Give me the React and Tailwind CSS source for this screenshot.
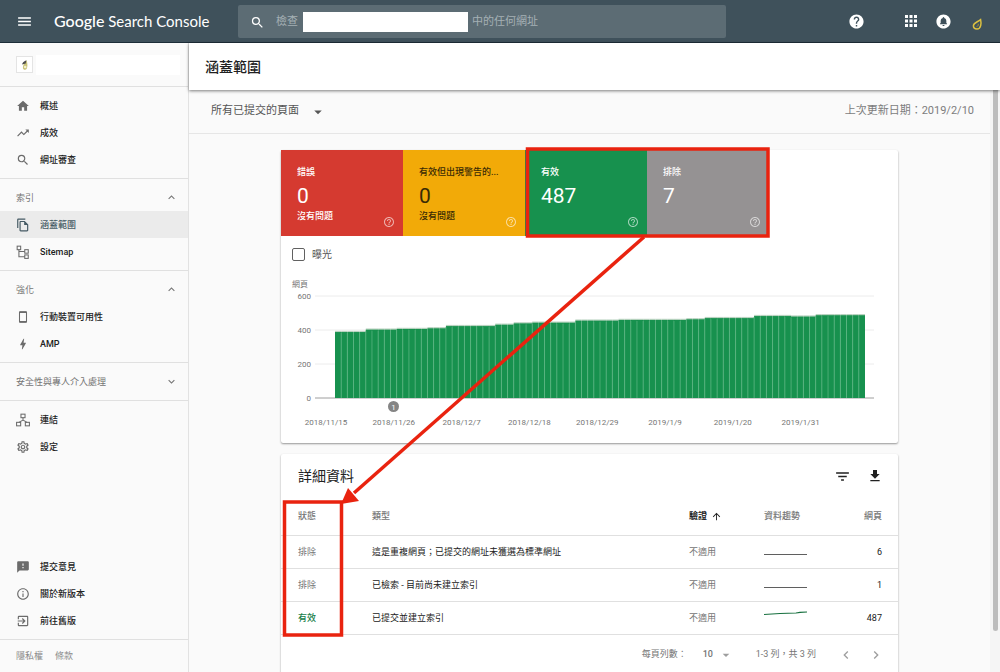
import React from "react";
import clsx from "clsx";
import {
  MdApps,
  MdArrowDropDown,
  MdArrowUpward,
  MdBolt,
  MdChevronLeft,
  MdChevronRight,
  MdCircleNotifications,
  MdExitToApp,
  MdExpandLess,
  MdExpandMore,
  MdFeedback,
  MdFileDownload,
  MdFilterList,
  MdHelp,
  MdHelpOutline,
  MdHome,
  MdInfoOutline,
  MdMenu,
  MdOutlineFileCopy,
  MdOutlineSettings,
  MdSearch,
  MdTrendingUp,
} from "react-icons/md";

function SitemapIcon({ size = 14 }) {
  return (
    <svg width={size} height={size} viewBox="0 0 24 24" fill="none" stroke="currentColor" strokeWidth="1.8">
      <rect x="2" y="2" width="6" height="6" />
      <rect x="15" y="8" width="6" height="6" />
      <rect x="15" y="17" width="6" height="6" />
      <path d="M5 8v12h10M5 11h10" />
    </svg>
  );
}

function LinksIcon({ size = 14 }) {
  return (
    <svg width={size} height={size} viewBox="0 0 24 24" fill="none" stroke="currentColor" strokeWidth="1.8">
      <rect x="8.5" y="2" width="7" height="6" />
      <rect x="1" y="16" width="7" height="6" />
      <rect x="16" y="16" width="7" height="6" />
      <path d="M12 8v4M5 16l7-4 7 4" />
    </svg>
  );
}

function PhoneIcon({ size = 14 }) {
  return (
    <svg width={size} height={size} viewBox="0 0 24 24" fill="none" stroke="currentColor">
      <rect x="6" y="3" width="12" height="18" rx="1" strokeWidth="1.8" />
      <path d="M6 4h12M6 20h12" strokeWidth="2.500" />
    </svg>
  );
}

function DropLogo({ className }) {
  return (
    <svg className={className} viewBox="0 0 14 14" fill="none">
      <path d="M10.6 2.6c.8 3.500.6 9.400-3.600 9.400-2.200 0-3.600-1.400-3.600-3.200C3.400 5.900 7.300 5.200 10.600 2.600z" stroke="#dcc040" strokeWidth="1.500" />
      <path d="M8.200 6.800c.3 1.300-.2 2.400-1.600 2.800" stroke="#b39b2a" strokeWidth="1" />
    </svg>
  );
}

const SECTIONS = [
  {
    items: [
      { label: "概述", icon: MdHome },
      { label: "成效", icon: MdTrendingUp },
      { label: "網址審查", icon: MdSearch },
    ],
  },
  {
    title: "索引",
    open: true,
    items: [
      { label: "涵蓋範圍", icon: MdOutlineFileCopy, active: true },
      { label: "Sitemap", icon: SitemapIcon },
    ],
  },
  {
    title: "強化",
    open: true,
    items: [
      { label: "行動裝置可用性", icon: PhoneIcon },
      { label: "AMP", icon: MdBolt },
    ],
  },
  { title: "安全性與專人介入處理", open: false, items: [] },
];

const TOOLS = [
  { label: "連結", icon: LinksIcon },
  { label: "設定", icon: MdOutlineSettings },
];

const SUPPORT = [
  { label: "提交意見", icon: MdFeedback },
  { label: "關於新版本", icon: MdInfoOutline },
  { label: "前往舊版", icon: MdExitToApp },
];

const TILES = [
  { label: "錯誤", value: 0, note: "沒有問題", className: "bg-[#d53a30] text-white" },
  { label: "有效但出現警告的...", value: 0, note: "沒有問題", className: "bg-[#f2aa08] text-[#3a2a05]" },
  { label: "有效", value: 487, className: "bg-[#17914e] text-white" },
  { label: "排除", value: 7, className: "bg-[#959293] text-white" },
];

// [number of days, indexed pages]
const RUNS = [
  [5, 388], [5, 402], [5, 406], [3, 410], [8, 423], [3, 431], [3, 439], [7, 443],
  [7, 455], [11, 459], [3, 463], [8, 470], [6, 482], [4, 479], [8, 487],
];
const DAYS = RUNS.flatMap(([count, value]) => Array(count).fill(value));
const DATES = [
  "2018/11/15", "2018/11/26", "2018/12/7", "2018/12/18",
  "2018/12/29", "2019/1/9", "2019/1/20", "2019/1/31",
];

const ROWS = [
  { status: "排除", type: "這是重複網頁；已提交的網址未獲選為標準網址", pages: 6 },
  { status: "排除", type: "已檢索 - 目前尚未建立索引", pages: 1 },
  { status: "有效", type: "已提交並建立索引", pages: 487, valid: true },
];

function TopBar() {
  return (
    <header className="flex h-[43px] shrink-0 items-center border-b border-[#1d2d38] bg-[#3f515b] text-white">
      <div className="flex w-[238px] shrink-0 items-center gap-[21px] pl-4">
        <button type="button" aria-label="選單">
          <MdMenu size={17} />
        </button>
        <a href="#home" className="whitespace-nowrap font-['Lato'] text-[15px] leading-5">
          <span className="text-base font-medium">Google</span> Search Console
        </a>
      </div>
      <div className="flex h-[33px] min-w-0 max-w-[488px] flex-1 items-center rounded-xs bg-[#5c6c74] pl-3 pt-0.5 text-[11px] text-[#a5b0b5]">
        <MdSearch size={15} className="mr-[11px] shrink-0 text-white" />
        <label htmlFor="inspect" className="shrink-0">檢查</label>
        <input id="inspect" type="text" className="ml-[5px] mr-1 h-5 w-[165px] min-w-0 bg-white px-1 text-gray-800 outline-none" />
        <span className="truncate">中的任何網址</span>
      </div>
      <div className="ml-auto flex shrink-0 items-center pr-4">
        <button type="button" aria-label="說明" className="mr-[37px]">
          <MdHelp size={17} />
        </button>
        <button type="button" aria-label="應用程式" className="mr-[15px]">
          <MdApps size={18} />
        </button>
        <button type="button" aria-label="通知" className="mr-[18px]">
          <MdCircleNotifications size={17} />
        </button>
        <button type="button" aria-label="帳戶" className="pt-1.5">
          <DropLogo className="h-[14px] w-[14px]" />
        </button>
      </div>
    </header>
  );
}

function NavItem({ label, icon: Icon, active }) {
  return (
    <a
      href="#nav"
      className={clsx(
        "flex h-[27px] items-center gap-[10px] pl-4 font-medium",
        active ? "bg-[#ebebeb] text-[#455a64]" : "text-[#212121]",
      )}
    >
      <span className={active ? "text-[#455a64]" : "text-[#6b6b6b]"}>
        <Icon size={14} />
      </span>
      {label}
    </a>
  );
}

function Sidebar() {
  return (
    <nav className="flex w-[189px] shrink-0 flex-col border-r border-[#e2e2e2] text-[9px] leading-4">
      <div className="flex h-11 shrink-0 items-center gap-[3px] border-b border-[#e0e0e0] pl-4 pr-2">
        <div className="flex h-[17px] w-[17px] items-center justify-center border border-[#e4e4e4] bg-white">
          <svg className="h-3 w-3" viewBox="0 0 12 12">
            <path d="M7.500 1.200C8.800 4 9 10.800 6 10.800S3 6.500 7.500 1.200z" fill="#c9c37a" />
            <path d="M7.400 1.200C4.500 2.200 3 4 3.200 5.600l3.500-1.200z" fill="#4b4b4b" />
            <circle cx="6.200" cy="8" r="1.300" fill="#f5f2d0" />
          </svg>
        </div>
        <div className="h-5 flex-1 bg-white" />
      </div>

      {SECTIONS.map((section, i) => (
        <div key={i} className="border-b border-[#e0e0e0] py-[5px]">
          {section.title && (
            <button
              type="button"
              aria-expanded={section.open}
              className="flex h-[27px] w-full items-center justify-between pl-4 pr-[10px] text-[#757575]"
            >
              {section.title}
              {section.open ? <MdExpandLess size={13} /> : <MdExpandMore size={13} />}
            </button>
          )}
          {section.items.map((item) => (
            <NavItem key={item.label} {...item} />
          ))}
        </div>
      ))}
      <div className="py-[5px]">
        {TOOLS.map((item) => (
          <NavItem key={item.label} {...item} />
        ))}
      </div>

      <div className="mt-auto border-b border-[#e0e0e0] py-[5px]">
        {SUPPORT.map((item) => (
          <NavItem key={item.label} {...item} />
        ))}
      </div>
      <div className="flex h-8 shrink-0 items-center gap-3 pl-4 text-[#8a8a8a]">
        <a href="#privacy">隱私權</a>
        <a href="#terms">條款</a>
      </div>
    </nav>
  );
}

function Tile({ label, value, note, className }) {
  return (
    <div className={clsx("flex h-[86px] w-[122px] min-w-0 flex-col px-4 pt-[14px] text-[9px]", className)}>
      <div className="truncate font-medium leading-4">{label}</div>
      <div className="text-[21px] leading-8">{value}</div>
      <div className="-mt-1 flex justify-between font-medium leading-4">
        {note}
        <MdHelpOutline size={12} className="-mr-2 ml-auto mt-2 shrink-0 text-white opacity-60" />
      </div>
    </div>
  );
}

function CoverageChart() {
  const left = 54;
  const base = 125;
  const step = 530 / DAYS.length;
  const yFor = (v) => base - (v * 102) / 600;

  return (
    <svg viewBox="0 0 617 170" className="block h-auto w-full text-[8px]" fill="#757575">
      <text x="11" y="14">網頁</text>
      {[0, 200, 400, 600].map((v) => (
        <g key={v}>
          <text x="30" y={yFor(v) + 3} textAnchor="end">{v}</text>
          <path d={`M34 ${yFor(v)}H593`} stroke={v ? "#ececec" : "#9e9e9e"} />
        </g>
      ))}
      {DAYS.map((v, i) => (
        <g key={i}>
          <rect x={left + i * step} y={yFor(v + 7)} width={step} height="2" fill="#b9d3c0" />
          <rect x={left + i * step} y={yFor(v)} width={step} height={base - yFor(v)} fill="#17914e" />
          {i > 0 && (
            <path d={`M${left + i * step} ${yFor(v) + 1}V${base}`} stroke="#5cb683" strokeWidth="0.7" />
          )}
        </g>
      ))}
      <circle cx="112.500" cy="133.500" r="5.500" fill="#858585" />
      <text x="112.500" y="136.500" textAnchor="middle" fill="#fff">1</text>
      {DATES.map((date, i) => (
        <text key={date} x={45 + i * 67.8} y="152" textAnchor="middle">{date}</text>
      ))}
    </svg>
  );
}

function DetailsTable() {
  return (
    <table className="w-full table-fixed text-left text-[9px] leading-4">
      <thead>
        <tr className="h-[37px] border-b border-[#e0e0e0] text-[#757575]">
          <th className="w-[91px] pl-[17px] font-medium">狀態</th>
          <th className="font-medium">類型</th>
          <th className="w-[75px] font-bold text-[#212121]">
            <button type="button" className="flex items-center gap-1">
              驗證 <MdArrowUpward size={11} />
            </button>
          </th>
          <th className="w-[66px] font-medium">資料趨勢</th>
          <th className="w-[68px] pr-4 text-right font-medium">網頁</th>
        </tr>
      </thead>
      <tbody>
        {ROWS.map((row) => (
          <tr key={row.type} className="h-[33px] border-b border-[#e0e0e0] text-[#212121]">
            <td className={clsx("pl-[17px]", row.valid ? "font-medium text-[#17804a]" : "text-[#757575]")}>
              {row.status}
            </td>
            <td>{row.type}</td>
            <td className="text-[#757575]">不適用</td>
            <td>
              <svg width="44" height="16" viewBox="0 0 44 16" fill="none" strokeWidth="1.200">
                {row.valid ? (
                  <path d="M0 4.500L8 4 16 3.500 32 3 36 2.300 43 2" stroke="#17703f" />
                ) : (
                  <path d="M0 10.500H43" stroke="#5f5f5f" />
                )}
              </svg>
            </td>
            <td className="pr-4 text-right">{row.pages}</td>
          </tr>
        ))}
      </tbody>
    </table>
  );
}

// Red boxes and the arrow that tie the summary tiles to the status column
function Annotations() {
  return (
    <svg
      viewBox="0 0 617 500"
      className="pointer-events-none absolute left-0 top-0 w-full overflow-visible"
      fill="none"
      stroke="#e9230f"
      strokeWidth="3.500"
    >
      <rect x="246.500" y="-1" width="240.500" height="87" />
      <rect x="3.500" y="352" width="57" height="133" />
      <path d="M363 87L73 343" />
      <path d="M60 354L67 338 78 351z" fill="#e9230f" stroke="none" />
    </svg>
  );
}

export default function App() {
  return (
    <div className="flex h-screen flex-col overflow-hidden bg-[#fafafa] font-['Roboto','Noto_Sans_CJK_TC',sans-serif] text-[#212121]">
      <TopBar />
      <div className="flex min-h-0 flex-1">
        <Sidebar />
        <div className="flex min-w-0 flex-1 flex-col">
          <div className="z-10 flex h-[47px] shrink-0 items-center bg-white pl-4 shadow-[0_1px_3px_rgba(0,0,0,0.5)]">
            <h1 className="text-sm font-medium">涵蓋範圍</h1>
          </div>
          <div className="flex min-h-0 flex-1">
            <main className="flex min-w-0 flex-1 flex-col">
              <div className="flex h-11 shrink-0 items-center justify-between border-b border-[#e6e6e6] pl-[22px] pr-4 text-[11px]">
                <label className="flex items-center gap-[10px] text-[#555]">
                  <select aria-label="頁面篩選" className="appearance-none bg-transparent outline-none">
                    <option>所有已提交的頁面</option>
                  </select>
                  <MdArrowDropDown size={18} />
                </label>
                <span className="text-[#7d7d7d]">上次更新日期：2019/2/10</span>
              </div>

              <div className="min-h-0 flex-1 overflow-y-auto [scrollbar-width:none]">
                <div className="relative mx-auto mt-4 flex max-w-[617px] flex-col gap-[11px]">
                  <section className="rounded-xs bg-white shadow-[0_1px_2px_rgba(0,0,0,0.4)]">
                    <div className="flex">
                      {TILES.map((tile) => (
                        <Tile key={tile.label} {...tile} />
                      ))}
                    </div>
                    <label className="flex h-[37px] w-max items-center gap-[7px] pl-[11px] text-[10px] text-[#555]">
                      <input type="checkbox" className="h-[13px] w-[13px] appearance-none rounded-xs border border-[#616161] bg-white" />
                      曝光
                    </label>
                    <CoverageChart />
                  </section>

                  <section className="rounded-xs bg-white shadow-[0_1px_2px_rgba(0,0,0,0.4)]">
                    <div className="flex h-11 items-center pl-[17px] pr-[15px]">
                      <h2 className="text-sm">詳細資料</h2>
                      <button type="button" aria-label="篩選" className="ml-auto mr-4">
                        <MdFilterList size={17} />
                      </button>
                      <button type="button" aria-label="下載">
                        <MdFileDownload size={16} />
                      </button>
                    </div>
                    <DetailsTable />
                    <div className="flex h-10 items-center justify-end pr-[14px] text-[9px] text-[#757575]">
                      <label htmlFor="per-page">每頁列數：</label>
                      <select id="per-page" className="ml-4 appearance-none bg-transparent font-medium outline-none">
                        <option>10</option>
                      </select>
                      <MdArrowDropDown size={16} className="ml-1 text-[#9e9e9e]" />
                      <span className="ml-[22px]">1-3 列，共 3 列</span>
                      <button type="button" aria-label="上一頁" className="ml-[22px] text-[#9e9e9e]">
                        <MdChevronLeft size={16} />
                      </button>
                      <button type="button" aria-label="下一頁" className="ml-[14px] text-[#9e9e9e]">
                        <MdChevronRight size={16} />
                      </button>
                    </div>
                  </section>
                  <Annotations />
                </div>
              </div>
            </main>
            <div className="w-[10px] shrink-0 bg-[#f5f5f5] pl-[3px]">
              <div className="h-[93%] w-[5px] rounded-b-sm bg-[#bdbdbd]" />
            </div>
          </div>
        </div>
      </div>
    </div>
  );
}
